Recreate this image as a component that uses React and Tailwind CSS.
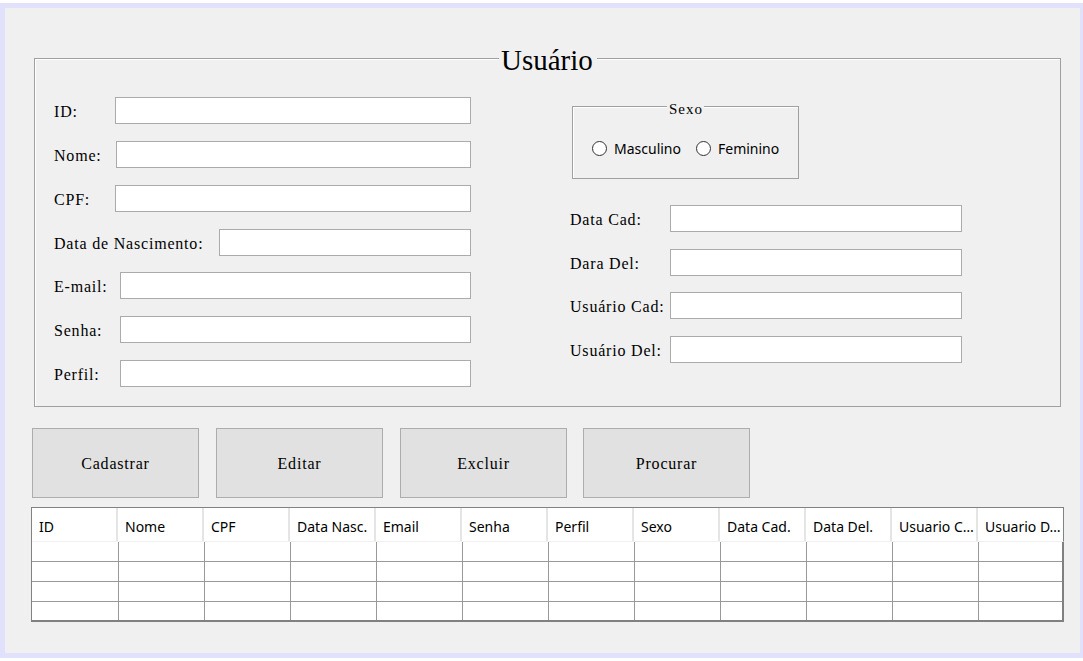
import React from "react";

const serif = { fontFamily: '"Liberation Serif", "Times New Roman", serif' };
const sans = { fontFamily: '"Noto Sans", "Open Sans", sans-serif' };

function Field({ label, labelW, className = "" }) {
  return (
    <div className={"flex items-center h-[27px] " + className}>
      <div
        className="shrink-0 pt-[3px] text-[16px] tracking-[0.8px] text-black leading-none"
        style={{ ...serif, width: labelW }}
      >
        {label}
      </div>
      <div className="flex-1 h-[27px] bg-white border border-[#ababab]" />
    </div>
  );
}

function Radio({ label }) {
  return (
    <div className="flex items-center">
      <div className="w-[15px] h-[15px] rounded-full border border-[#333333] bg-white" />
      <span className="ml-[7px] text-[14px] text-black leading-none" style={sans}>
        {label}
      </span>
    </div>
  );
}

const cols = [
  "ID",
  "Nome",
  "CPF",
  "Data Nasc.",
  "Email",
  "Senha",
  "Perfil",
  "Sexo",
  "Data Cad.",
  "Data Del.",
  "Usuario C…",
  "Usuario D…",
];

export default function App() {
  return (
    <div className="w-[1083px] h-[661px] bg-white pt-[3px]">
      <div className="h-[655px] bg-[#e1e1fb] pl-[5px] pr-[3px] pt-[5px] pb-[5px]">
        <div className="h-[645px] bg-[#f0f0f0] pl-[27px] pt-[50px]">
          {/* Group box */}
          <div className="relative ml-[2px] w-[1027px] h-[349px] border border-[#a0a0a0] shadow-[inset_1px_1px_0_#ffffff] flex">
            <span
              className="absolute top-[-13px] left-[464px] h-[29px] leading-[29px] text-[29px] pl-[2px] pr-[4px] bg-[#f0f0f0] text-black"
              style={serif}
            >
              Usuário
            </span>

            {/* Left column */}
            <div className="w-[436px] pl-[19px] pt-[38px] flex flex-col gap-[17px]">
              <Field label="ID:" labelW={61} />
              <Field label="Nome:" labelW={62} />
              <Field label="CPF:" labelW={61} />
              <Field label="Data de Nascimento:" labelW={165} />
              <Field label="E-mail:" labelW={66} className="-mt-px" />
              <Field label="Senha:" labelW={66} />
              <Field label="Perfil:" labelW={66} />
            </div>

            {/* Right column */}
            <div className="ml-[99px] w-[392px] pt-[47px] flex flex-col">
              <div className="relative ml-[2px] w-[227px] h-[73px] border border-[#a0a0a0] shadow-[inset_1px_1px_0_#ffffff]">
                <span
                  className="absolute top-[-5px] left-[94px] h-[15px] leading-[15px] text-[15px] tracking-[1px] pl-[2px] pr-[1px] bg-[#f0f0f0] text-black"
                  style={serif}
                >
                  Sexo
                </span>
                <div className="pl-[19px] pt-[34px] flex items-center gap-[15px]">
                  <Radio label="Masculino" />
                  <Radio label="Feminino" />
                </div>
              </div>
              <div className="mt-[26px] flex flex-col gap-[17px]">
                <Field label="Data Cad:" labelW={100} />
                <Field label="Dara Del:" labelW={100} />
                <Field label="Usuário Cad:" labelW={100} className="-mt-px" />
                <Field label="Usuário Del:" labelW={100} />
              </div>
            </div>
          </div>

          {/* Buttons */}
          <div className="mt-[21px] flex">
            {["Cadastrar", "Editar", "Excluir", "Procurar"].map((b, i) => (
              <div
                key={b}
                className={
                  "w-[167px] h-[70px] pt-[2px] bg-[#e1e1e1] border border-[#adadad] flex items-center justify-center text-[16px] tracking-[0.8px] text-black " +
                  (i === 0 ? "" : i === 3 ? "ml-[16px]" : "ml-[17px]")
                }
                style={serif}
              >
                {b}
              </div>
            ))}
          </div>

          {/* Table */}
          <div className="mt-[9px] -ml-px w-[1033px] border-l border-t border-[#828282]">
            <div className="flex h-[34px] bg-white border-r border-[#828282] border-b border-b-[#f0f0f0]">
              {cols.map((c, i) => (
                <div
                  key={c}
                  className={
                    "h-full flex items-center pl-[7px] pt-[3px] text-[14px] text-black whitespace-nowrap overflow-hidden " +
                    (i === cols.length - 1 ? "flex-1" : "w-[86px] shrink-0 border-r-2 border-[#e5e5e5]")
                  }
                  style={sans}
                >
                  {c}
                </div>
              ))}
            </div>
            <div className="bg-white border-r-2 border-b-2 border-[#808080]">
              {[0, 1, 2, 3].map((r) => (
                <div
                  key={r}
                  className={"flex " + (r < 3 ? "h-[20px] border-b border-[#999999]" : "h-[18px]")}
                >
                  {cols.map((c, i) => (
                    <div
                      key={c}
                      className={
                        "h-full " +
                        (i === cols.length - 1 ? "flex-1 " : "w-[86px] shrink-0 ") +
                        (i === 0 ? "" : "border-l border-[#999999]")
                      }
                    />
                  ))}
                </div>
              ))}
            </div>
          </div>
        </div>
      </div>
    </div>
  );
}
